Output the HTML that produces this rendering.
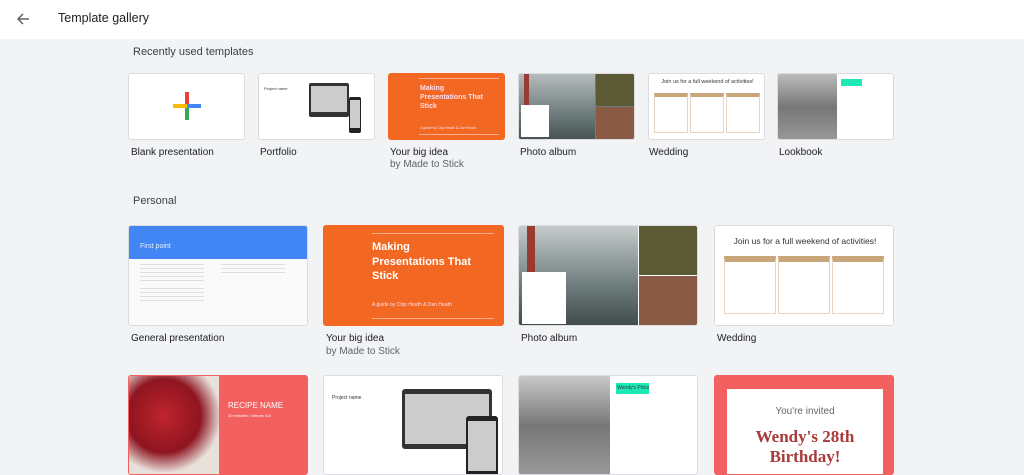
<!DOCTYPE html>
<html><head><style>
*{margin:0;padding:0;box-sizing:border-box}
body{width:1024px;height:463px;overflow:hidden;background:#f1f3f4;font-family:"Liberation Sans",Arial,sans-serif;color:#3c4043;position:relative}
.hdr{position:absolute;left:0;top:0;width:1024px;height:39px;background:#fff}
.hdr .t{position:absolute;left:58px;top:11px;font-size:12.5px;color:#202124}
.abs{position:absolute}
.card{position:absolute;background:#fff;border:1px solid #dadce0;border-radius:3px;overflow:hidden}
.lab{position:absolute;font-size:10px;color:#202124}
.sub{position:absolute;font-size:10px;color:#5f6368}
.h{position:absolute;font-size:11px;color:#3c4043}
</style></head><body>
<div class="hdr">
<svg class="abs" style="left:15px;top:11px" width="16" height="16" viewBox="0 0 16 16"><path d="M14 8H3M8 3L3 8l5 5" stroke="#5f6368" stroke-width="1.5" fill="none"/></svg>
<div class="t">Template gallery</div>
</div>
<div class="h" style="left:133px;top:46px">Recently used templates</div>

<div class="card" style="left:128px;top:73px;width:117px;height:67px">
<div class="abs" style="left:56px;top:18px;width:4px;height:14px;background:#ea4335"></div>
<div class="abs" style="left:56px;top:32px;width:4px;height:14px;background:#34a853"></div>
<div class="abs" style="left:44px;top:30px;width:14px;height:4px;background:#fbbc04"></div>
<div class="abs" style="left:58px;top:30px;width:14px;height:4px;background:#4285f4"></div>
</div>
<div class="card" style="left:258px;top:73px;width:117px;height:67px">
<div class="abs" style="left:5px;top:12px;font-size:4px;color:#333">Project name</div>
<div class="abs" style="left:50px;top:9px;width:40px;height:34px;background:#333;border-radius:2px"><div class="abs" style="left:2px;top:3px;width:36px;height:26px;background:#ccc"></div></div>
<div class="abs" style="left:90px;top:23px;width:12px;height:36px;background:#222;border-radius:2px"><div class="abs" style="left:1px;top:3px;width:10px;height:28px;background:#ccc"></div></div>
</div>
<div class="card" style="left:388px;top:73px;width:117px;height:67px;background:#f26722;border-color:#f26722">
<div class="abs" style="left:30px;top:4px;width:80px;height:1px;background:#f8b08c"></div>
<div class="abs" style="left:31px;top:10px;font-size:7px;font-weight:bold;color:#fde;line-height:9px">Making<br>Presentations That<br>Stick</div>
<div class="abs" style="left:31px;top:52px;font-size:3.5px;color:#fde">A guide by Chip Heath &amp; Dan Heath</div>
<div class="abs" style="left:30px;top:60px;width:80px;height:1px;background:#f8b08c"></div>
</div>
<div class="card" style="left:518px;top:73px;width:117px;height:67px;background:#6e7b7d">
<div class="abs" style="left:0;top:0;width:76px;height:67px;background:linear-gradient(#b5bcbc,#6d7b7c 60%,#44504f)"></div>
<div class="abs" style="left:5px;top:0;width:5px;height:40px;background:#9b3a30"></div>
<div class="abs" style="left:77px;top:0;width:40px;height:32px;background:#5b5a35"></div>
<div class="abs" style="left:77px;top:33px;width:40px;height:34px;background:#8a5b44"></div>
<div class="abs" style="left:2px;top:31px;width:28px;height:32px;background:#fff"></div>
</div>
<div class="card" style="left:648px;top:73px;width:117px;height:67px">
<div class="abs" style="left:0;width:117px;top:5px;text-align:center;font-size:5.5px;color:#333">Join us for a full weekend of activities!</div>
<div class="abs" style="left:5px;top:19px;width:34px;height:40px;border:1px solid #e8d4c0;border-top:4px solid #c9a57a"></div>
<div class="abs" style="left:41px;top:19px;width:34px;height:40px;border:1px solid #e8d4c0;border-top:4px solid #c9a57a"></div>
<div class="abs" style="left:77px;top:19px;width:34px;height:40px;border:1px solid #e8d4c0;border-top:4px solid #c9a57a"></div>
</div>
<div class="card" style="left:777px;top:73px;width:117px;height:67px">
<div class="abs" style="left:0;top:0;width:59px;height:67px;background:linear-gradient(#bbb,#777 50%,#999)"></div>
<div class="abs" style="left:63px;top:5px;width:21px;height:7px;background:#1de9b6"></div>
</div>
<div class="lab" style="left:131px;top:147px">Blank presentation</div>
<div class="lab" style="left:260px;top:147px">Portfolio</div>
<div class="lab" style="left:390px;top:147px">Your big idea</div>
<div class="sub" style="left:390px;top:159px">by Made to Stick</div>
<div class="lab" style="left:520px;top:147px">Photo album</div>
<div class="lab" style="left:649px;top:147px">Wedding</div>
<div class="lab" style="left:779px;top:147px">Lookbook</div>

<div class="h" style="left:133px;top:195px">Personal</div>

<div class="card" style="left:128px;top:225px;width:180px;height:101px;background:#fafafa">
<div class="abs" style="left:0;top:0;width:180px;height:33px;background:#4285f4"></div>
<div class="abs" style="left:11px;top:17px;font-size:7px;color:#e8f0fe">First point</div>
<div class="abs" style="left:11px;top:38px;width:64px;height:20px;background:repeating-linear-gradient(#ddd 0 1px,transparent 1px 4px)"></div>
<div class="abs" style="left:92px;top:38px;width:64px;height:12px;background:repeating-linear-gradient(#ddd 0 1px,transparent 1px 4px)"></div>
<div class="abs" style="left:11px;top:62px;width:64px;height:16px;background:repeating-linear-gradient(#ddd 0 1px,transparent 1px 4px)"></div>
</div>
<div class="card" style="left:323px;top:225px;width:181px;height:101px;background:#f26722;border-color:#f26722">
<div class="abs" style="left:48px;top:7px;width:122px;height:1px;background:#f8b08c"></div>
<div class="abs" style="left:48px;top:14px;font-size:11px;font-weight:bold;color:#fff;line-height:14.5px">Making<br>Presentations That<br>Stick</div>
<div class="abs" style="left:48px;top:76px;font-size:5px;color:#fde">A guide by Chip Heath &amp; Dan Heath</div>
<div class="abs" style="left:48px;top:92px;width:122px;height:1px;background:#f8b08c"></div>
</div>
<div class="card" style="left:518px;top:225px;width:180px;height:101px">
<div class="abs" style="left:0;top:0;width:119px;height:101px;background:linear-gradient(#c5cbcb,#6d7b7c 60%,#3f4a49)"></div>
<div class="abs" style="left:8px;top:0;width:8px;height:60px;background:#9b3a30"></div>
<div class="abs" style="left:120px;top:0;width:60px;height:49px;background:#5b5a35"></div>
<div class="abs" style="left:120px;top:50px;width:60px;height:51px;background:#8a5b44"></div>
<div class="abs" style="left:3px;top:46px;width:44px;height:52px;background:#fff"></div>
</div>
<div class="card" style="left:714px;top:225px;width:180px;height:101px">
<div class="abs" style="left:0;width:180px;top:10px;text-align:center;font-size:8.5px;color:#333">Join us for a full weekend of activities!</div>
<div class="abs" style="left:9px;top:30px;width:52px;height:58px;border:1px solid #e8d4c0;border-top:6px solid #c9a57a"></div>
<div class="abs" style="left:63px;top:30px;width:52px;height:58px;border:1px solid #e8d4c0;border-top:6px solid #c9a57a"></div>
<div class="abs" style="left:117px;top:30px;width:52px;height:58px;border:1px solid #e8d4c0;border-top:6px solid #c9a57a"></div>
</div>
<div class="lab" style="left:131px;top:333px">General presentation</div>
<div class="lab" style="left:326px;top:333px">Your big idea</div>
<div class="sub" style="left:326px;top:346px">by Made to Stick</div>
<div class="lab" style="left:521px;top:333px">Photo album</div>
<div class="lab" style="left:717px;top:333px">Wedding</div>

<div class="card" style="left:128px;top:375px;width:180px;height:100px;background:#f26060;border-color:#f26060">
<div class="abs" style="left:0;top:0;width:90px;height:100px;background:radial-gradient(circle at 35px 40px,#c0242c,#8e1520 45%,#e8e0da 70%)"></div>
<div class="abs" style="left:99px;top:25px;font-size:8px;color:#fff">RECIPE NAME</div>
<div class="abs" style="left:99px;top:37px;font-size:4px;color:#fff">30 minutes • Serves 4-6</div>
</div>
<div class="card" style="left:323px;top:375px;width:180px;height:100px">
<div class="abs" style="left:8px;top:19px;font-size:5px;color:#333">Project name</div>
<div class="abs" style="left:78px;top:13px;width:90px;height:60px;background:#333;border-radius:3px"><div class="abs" style="left:3px;top:5px;width:84px;height:50px;background:#ccc"></div></div>
<div class="abs" style="left:142px;top:40px;width:32px;height:60px;background:#222;border-radius:3px"><div class="abs" style="left:2px;top:5px;width:28px;height:50px;background:#ccc"></div></div>
</div>
<div class="card" style="left:518px;top:375px;width:180px;height:100px">
<div class="abs" style="left:0;top:0;width:91px;height:100px;background:linear-gradient(#c8c8c8,#777 50%,#999)"></div>
<div class="abs" style="left:97px;top:7px;width:33px;height:11px;background:#1de9b6"></div>
<div class="abs" style="left:98px;top:9px;font-size:5px;color:#333">Wendy's Picks</div>
</div>
<div class="card" style="left:714px;top:375px;width:180px;height:100px;background:#f26060;border-color:#f26060">
<div class="abs" style="left:12px;top:13px;width:156px;height:90px;background:#fff"></div>
<div class="abs" style="left:12px;width:156px;top:30px;text-align:center;font-size:10px;color:#666">You're invited</div>
<div class="abs" style="left:12px;width:156px;top:51px;text-align:center;font-size:17px;font-weight:bold;color:#a83a3a;font-family:'Liberation Serif',serif;line-height:20px">Wendy's 28th<br>Birthday!</div>
</div>
</body></html>
